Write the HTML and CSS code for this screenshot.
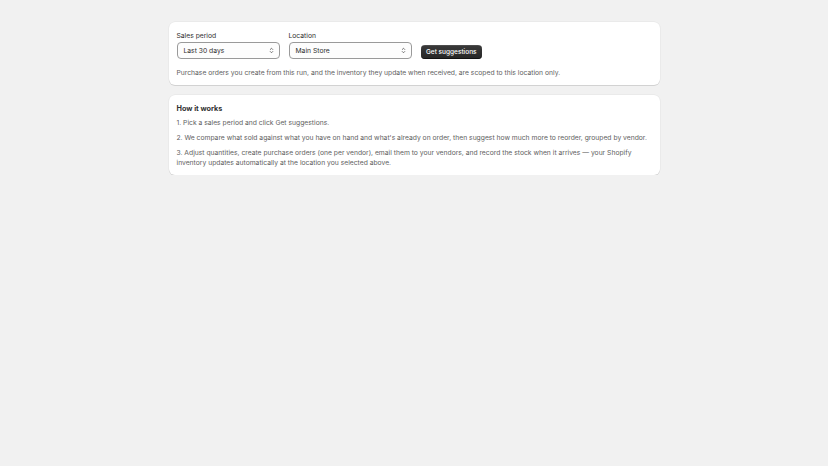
FILE: index.html
```html
<!DOCTYPE html>
<html>
<head>
<link rel="stylesheet" href="styles.css">
<title>Reorder suggestions</title>
</head>
<body>
  <main class="pagina">
    <section class="tarjeta">
      <div class="fila-campos">
        <div class="campo">
          <label class="etiqueta" for="periodo">Sales period</label>
          <div class="selector selector-periodo">
            <span id="periodo">Last 30 days</span>
            <svg class="flechas" viewBox="0 0 10 14" width="5" height="7">
              <path d="M2.5 5 5 2.5 7.5 5M2.5 9 5 11.5 7.5 9" fill="none" stroke="#4a4a4a" stroke-width="1.5" stroke-linecap="round" stroke-linejoin="round"/>
            </svg>
          </div>
        </div>
        <div class="campo">
          <label class="etiqueta" for="ubicacion">Location</label>
          <div class="selector selector-ubicacion">
            <span id="ubicacion">Main Store</span>
            <svg class="flechas" viewBox="0 0 10 14" width="5" height="7">
              <path d="M2.5 5 5 2.5 7.5 5M2.5 9 5 11.5 7.5 9" fill="none" stroke="#4a4a4a" stroke-width="1.5" stroke-linecap="round" stroke-linejoin="round"/>
            </svg>
          </div>
        </div>
        <button class="boton-oscuro">Get suggestions</button>
      </div>
      <p class="texto-suave">Purchase orders you create from this run, and the inventory they update when received, are scoped to this location only.</p>
    </section>

    <section class="tarjeta">
      <h2 class="titulo-tarjeta">How it works</h2>
      <p class="texto-suave">1. Pick a sales period and click Get suggestions.</p>
      <p class="texto-suave">2. We compare what sold against what you have on hand and what's already on order, then suggest how much more to reorder, grouped by vendor.</p>
      <p class="texto-suave">3. Adjust quantities, create purchase orders (one per vendor), email them to your vendors, and record the stock when it arrives — your Shopify inventory updates automatically at the location you selected above.</p>
    </section>
  </main>
</body>
</html>
```

FILE: styles.css
```css
body {
  margin: 0;
  background-color: #f1f1f1;
  color: #303030;
  font-family: Inter, "Noto Sans", sans-serif;
  font-size: 6.75px;
  line-height: 10px;
}

.pagina {
  max-width: 491px;
  margin: 0 auto;
  padding-top: 22px;
  display: flex;
  flex-direction: column;
  gap: 10px;
}

.tarjeta {
  background-color: #ffffff;
  border-radius: 6px;
  padding: 9px 8px 7px;
  display: flex;
  flex-direction: column;
  gap: 5px;
  box-shadow: 0 0 0 0.5px rgba(0, 0, 0, 0.06), 0 1px 0 rgba(0, 0, 0, 0.1);
}

.fila-campos {
  display: flex;
  align-items: flex-end;
  gap: 9px;
  margin-bottom: 4px;
}

.campo {
  display: flex;
  flex-direction: column;
  gap: 1px;
}

.etiqueta {
  color: #303030;
}

.selector {
  box-sizing: border-box;
  height: 17px;
  padding: 0 5px 0 6px;
  display: flex;
  align-items: center;
  justify-content: space-between;
  border: 1px solid #9a9a9a;
  border-radius: 4px;
  background-color: #fdfdfd;
}

.selector-periodo {
  width: 103px;
}

.selector-ubicacion {
  width: 123px;
}

.boton-oscuro {
  height: 14px;
  margin-bottom: 0.5px;
  padding: 0 5.5px;
  border: none;
  border-radius: 4px;
  background: linear-gradient(#3a3a3a, #262626);
  box-shadow: 0 -0.5px 0 #000 inset, 0 0.5px 0 rgba(255, 255, 255, 0.2) inset;
  color: #ffffff;
  font-family: Inter, "Noto Sans", sans-serif;
  font-size: 6.5px;
  font-weight: 550;
}

.texto-suave {
  margin: 0;
  color: #616161;
}

.titulo-tarjeta {
  margin: 0 0 -1px;
  font-size: 7.25px;
  font-weight: 650;
  color: #303030;
}
```
